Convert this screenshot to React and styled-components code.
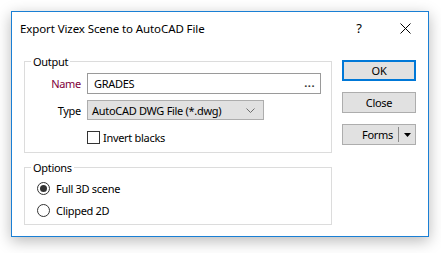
import React from "react";
import styled, { createGlobalStyle } from "styled-components";

const Global = createGlobalStyle`
  html, body {
    margin: 0;
    padding: 0;
    background: #ffffff;
  }
  body {
    font-family: "Noto Sans", "Open Sans", sans-serif;
    font-size: 11px;
    letter-spacing: -0.3px;
    color: #000000;
  }
`;

const Page = styled.div`
  width: 441px;
  height: 253px;
  padding: 11px 0 0 11px;
  box-sizing: border-box;
`;

const Window = styled.div`
  width: 418px;
  height: 226px;
  box-sizing: border-box;
  border: 1px solid #1a7fd4;
  background: #ffffff;
  box-shadow: 0 4px 14px rgba(0, 0, 0, 0.28);
  display: flex;
  flex-direction: column;
`;

const TitleBar = styled.div`
  height: 32px;
  display: flex;
  align-items: center;
  padding-left: 8px;
`;

const Title = styled.div`
  flex: 1;
  font-size: 11.5px;
  letter-spacing: -0.1px;
`;

const TitleButton = styled.div`
  width: 46px;
  height: 30px;
  display: flex;
  align-items: center;
  justify-content: center;
  font-size: 13px;
`;

const Body = styled.div`
  flex: 1;
  display: flex;
  gap: 10px;
  padding: 10px 12px 0 12px;
`;

const Column = styled.div`
  display: flex;
  flex-direction: column;
  gap: ${(p) => p.gap || 0}px;
  padding-top: ${(p) => p.top || 0}px;
`;

const Group = styled.fieldset`
  margin: 0;
  width: 308px;
  height: ${(p) => p.h}px;
  box-sizing: border-box;
  border: 1px solid #dcdcdc;
  padding: ${(p) => p.pad || "0"};
  display: flex;
  flex-direction: column;
  gap: ${(p) => p.gap || 0}px;
`;

const Legend = styled.legend`
  padding: 0 2px;
  margin-left: 6px;
  line-height: 15px;
`;

const Row = styled.div`
  display: flex;
  align-items: center;
  gap: 6px;
  margin-top: ${(p) => p.mt || 0}px;
`;

const Label = styled.div`
  width: 56px;
  text-align: right;
  color: ${(p) => p.color || "#000000"};
`;

const TextBox = styled.div`
  width: 234px;
  height: 21px;
  box-sizing: border-box;
  border: 1px solid #9a9a9a;
  display: flex;
  align-items: center;
  justify-content: space-between;
  padding: 0 5px 0 6px;
`;

const Dots = styled.span`
  font-weight: bold;
  letter-spacing: 0.5px;
  margin-top: -3px;
  color: #333333;
`;

const Select = styled.div`
  width: 177px;
  height: 20px;
  box-sizing: border-box;
  border: 1px solid #adadad;
  background: #e1e1e1;
  display: flex;
  align-items: center;
  justify-content: space-between;
  padding: 0 8px 0 4px;
`;

const Check = styled.div`
  display: flex;
  align-items: center;
  gap: 3px;
  margin-left: ${(p) => p.indent || 0}px;
  margin-top: ${(p) => p.mt || 0}px;
`;

const Box = styled.span`
  width: 13px;
  height: 13px;
  box-sizing: border-box;
  border: 1px solid #333333;
  background: #ffffff;
`;

const Radio = styled.span`
  width: 13px;
  height: 13px;
  box-sizing: border-box;
  border: 1px solid #333333;
  border-radius: 50%;
  display: flex;
  align-items: center;
  justify-content: center;

  &::after {
    content: "";
    width: 7px;
    height: 7px;
    border-radius: 50%;
    background: ${(p) => (p.checked ? "#333333" : "transparent")};
  }
`;

const Choice = styled.div`
  display: flex;
  align-items: center;
  gap: 6px;
  margin-left: 12px;
`;

const Button = styled.div`
  width: 74px;
  height: 21px;
  box-sizing: border-box;
  border: ${(p) => (p.primary ? "2px solid #0078d7" : "1px solid #adadad")};
  background: #e1e1e1;
  display: flex;
  align-items: center;
  justify-content: center;
`;

const SplitButton = styled(Button)`
  justify-content: flex-end;
  padding-right: 4px;
  gap: 5px;
`;

const Divider = styled.span`
  width: 1px;
  height: 15px;
  background: #8a8a8a;
`;

export default function App() {
  return (
    <>
      <Global />
      <Page>
        <Window>
          <TitleBar>
            <Title>Export Vizex Scene to AutoCAD File</Title>
            <TitleButton>?</TitleButton>
            <TitleButton>
              <svg width="11" height="11" viewBox="0 0 11 11">
                <path d="M0.5 0.5 L10.5 10.5 M10.5 0.5 L0.5 10.5" stroke="#000" strokeWidth="1" />
              </svg>
            </TitleButton>
          </TitleBar>
          <Body>
            <Column gap={7}>
              <Group h={99} pad="4px 0 0 0">
                <Legend>Output</Legend>
                <Row>
                  <Label color="#80003a">Name</Label>
                  <TextBox>
                    <span>GRADES</span>
                    <Dots>...</Dots>
                  </TextBox>
                </Row>
                <Row mt={6}>
                  <Label>Type</Label>
                  <Select>
                    <span>AutoCAD DWG File (*.dwg)</span>
                    <svg width="9" height="5" viewBox="0 0 9 5">
                      <path d="M0.5 0.5 L4.5 4.5 L8.5 0.5" fill="none" stroke="#6d6d6d" strokeWidth="1" />
                    </svg>
                  </Select>
                </Row>
                <Check indent={62} mt={10}>
                  <Box />
                  <span>Invert blacks</span>
                </Check>
              </Group>
              <Group h={65} pad="6px 0 0 0" gap={7}>
                <Legend>Options</Legend>
                <Choice>
                  <Radio checked />
                  <span>Full 3D scene</span>
                </Choice>
                <Choice>
                  <Radio />
                  <span>Clipped 2D</span>
                </Choice>
              </Group>
            </Column>
            <Column gap={11} top={6}>
              <Button primary>OK</Button>
              <Button>Close</Button>
              <SplitButton>
                <span>Forms</span>
                <Divider />
                <svg width="7" height="4" viewBox="0 0 7 4">
                  <path d="M0 0 L7 0 L3.5 4 Z" fill="#000" />
                </svg>
              </SplitButton>
            </Column>
          </Body>
        </Window>
      </Page>
    </>
  );
}
